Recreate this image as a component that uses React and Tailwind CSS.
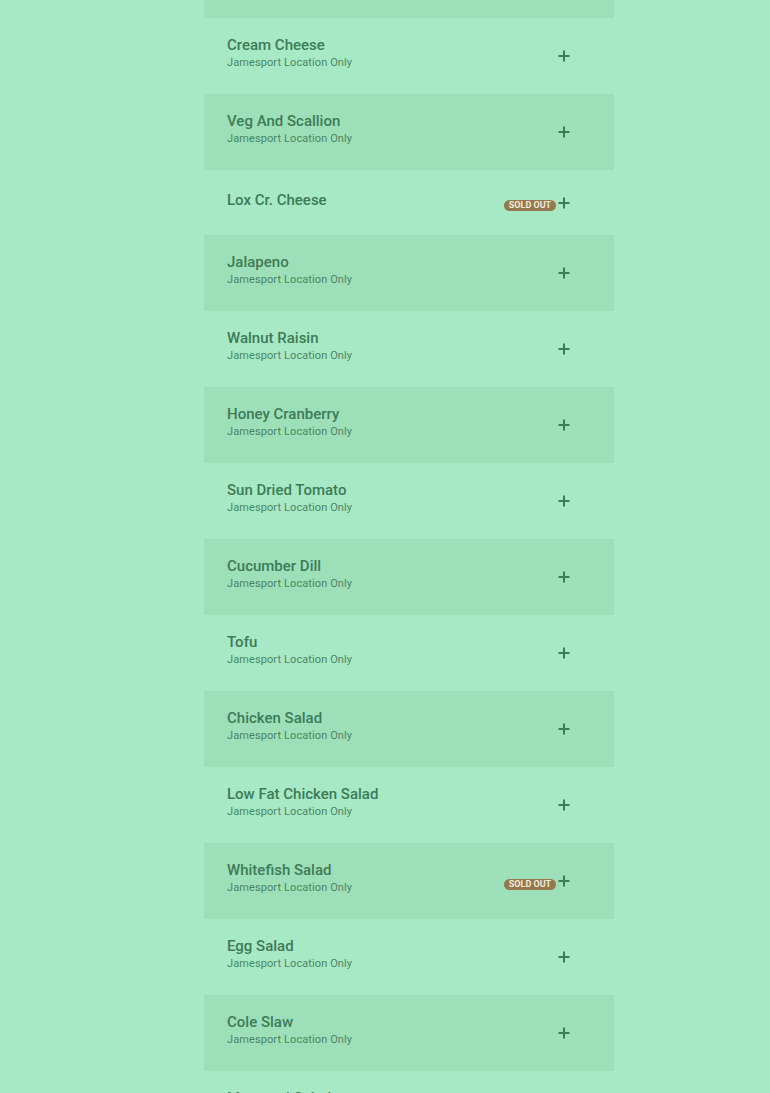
import React from "react";

const items = [
  { name: "Cream Cheese", sub: true },
  { name: "Veg And Scallion", sub: true },
  { name: "Lox Cr. Cheese", sub: false, sold: true },
  { name: "Jalapeno", sub: true },
  { name: "Walnut Raisin", sub: true },
  { name: "Honey Cranberry", sub: true },
  { name: "Sun Dried Tomato", sub: true },
  { name: "Cucumber Dill", sub: true },
  { name: "Tofu", sub: true },
  { name: "Chicken Salad", sub: true },
  { name: "Low Fat Chicken Salad", sub: true },
  { name: "Whitefish Salad", sub: true, sold: true },
  { name: "Egg Salad", sub: true },
  { name: "Cole Slaw", sub: true },
  { name: "Macaroni Salad", sub: true },
];

function Plus() {
  return (
    <svg width="12" height="12" viewBox="0 0 12 12" className="shrink-0">
      <path d="M6 0.5v11M0.5 6h11" stroke="#3d7b57" strokeWidth="2" />
    </svg>
  );
}

function Row({ item, dark }) {
  return (
    <div
      className={`flex items-center pl-[23px] pr-[44px] ${
        dark ? "bg-[#9ddfb9]" : "bg-[#a7e9c5]"
      }`}
    >
      <div className={`flex-1 ${item.sub ? "pt-[18px] pb-[25px]" : "pt-[21px] pb-[26px]"}`}>
        <div className="text-[15px] leading-[18px] font-medium text-[#3d7b57]">
          {item.name}
        </div>
        {item.sub && (
          <div className="text-[11px] leading-[13px] tracking-[0.1px] text-[#4a8662] mt-[2px]">
            Jamesport Location Only
          </div>
        )}
      </div>
      <div className="flex items-center gap-[2px]">
        {item.sold && (
          <span className="mt-[6px] inline-flex items-center justify-center h-[11px] w-[52px] rounded-full bg-[#94784f] text-[#f3ecd8] text-[9px] leading-[11px] font-bold">
            SOLD OUT
          </span>
        )}
        <Plus />
      </div>
    </div>
  );
}

export default function App() {
  return (
    <div
      className="h-[1093px] w-[770px] overflow-hidden bg-[#a7e9c5]"
      style={{ fontFamily: "Roboto, 'Liberation Sans', sans-serif" }}
    >
      <div className="ml-[204px] w-[410px]">
        <div className="h-[18px] bg-[#9ddfb9]" />
        {items.map((it, i) => (
          <Row key={it.name} item={it} dark={i % 2 === 1} />
        ))}
      </div>
    </div>
  );
}
